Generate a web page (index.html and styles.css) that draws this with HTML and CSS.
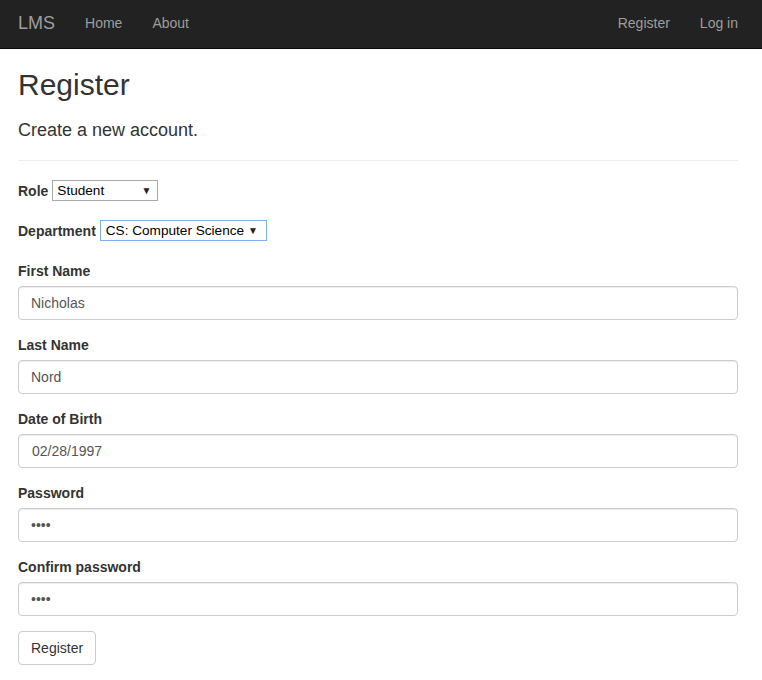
FILE: index.html
```html
<!DOCTYPE html>
<html lang="en">
<head>
<meta charset="utf-8">
<title>Register - LMS</title>
<link rel="stylesheet" href="styles.css">
</head>
<body>
<nav class="navbar">
  <a class="brand" href="#">LMS</a>
  <ul class="nav">
    <li><a href="#">Home</a></li>
    <li><a href="#">About</a></li>
  </ul>
  <ul class="nav nav-right">
    <li><a href="#">Register</a></li>
    <li><a href="#">Log in</a></li>
  </ul>
</nav>
<main class="content">
  <h2 class="title">Register</h2>
  <h4 class="subtitle">Create a new account.</h4>
  <hr class="rule">
  <form class="form">
    <div class="inline-row">
      <label class="label">Role</label>
      <div class="select select-role"><span class="select-text">Student</span><span class="arrow">&#9660;</span></div>
    </div>
    <div class="inline-row inline-row-last">
      <label class="label">Department</label>
      <div class="select select-dept"><span class="select-text">CS: Computer Science</span><span class="arrow">&#9660;</span></div>
    </div>
    <div class="group">
      <label class="label block">First Name</label>
      <input class="control" type="text" value="Nicholas">
    </div>
    <div class="group">
      <label class="label block">Last Name</label>
      <input class="control" type="text" value="Nord">
    </div>
    <div class="group">
      <label class="label block">Date of Birth</label>
      <input class="control control-date" type="text" value="02/28/1997">
    </div>
    <div class="group">
      <label class="label block">Password</label>
      <input class="control" type="password" value="1234">
    </div>
    <div class="group">
      <label class="label block">Confirm password</label>
      <input class="control" type="password" value="1234">
    </div>
    <button class="btn" type="button">Register</button>
  </form>
</main>
</body>
</html>
```

FILE: styles.css
```css
* { box-sizing: border-box; }
html, body { margin: 0; padding: 0; }
body {
  font-family: "Liberation Sans", Arial, Helvetica, sans-serif;
  font-size: 14px;
  line-height: 20px;
  color: #333;
  background: #fff;
}
.navbar {
  display: flex;
  align-items: flex-start;
  height: 49px;
  background: #222;
  border-bottom: 1px solid #080808;
  padding-left: 18px;
  padding-right: 9px;
}
.brand {
  font-size: 18px;
  line-height: 20px;
  color: #9d9d9d;
  text-decoration: none;
  padding: 13px 15px 15px 0;
}
.nav {
  display: flex;
  list-style: none;
  margin: 0;
  padding: 0;
}
.nav-right { margin-left: auto; }
.nav a {
  display: block;
  color: #9d9d9d;
  text-decoration: none;
  padding: 13px 15px 15px;
  line-height: 20px;
}
.content {
  padding: 0 24px 20px 18px;
}
.title {
  font-size: 30px;
  line-height: 33px;
  font-weight: 500;
  margin: 19px 0 0;
}
.subtitle {
  font-size: 18px;
  line-height: 20px;
  font-weight: 500;
  margin: 19px 0 0;
}
.rule {
  border: 0;
  border-top: 1px solid #eee;
  margin: 20px 0 19px;
  height: 0;
}
.form { margin: 0; }
.label {
  font-weight: bold;
  line-height: 20px;
}
.label.block {
  display: block;
  margin-bottom: 5px;
}
.inline-row {
  display: flex;
  align-items: center;
  gap: 4px;
  height: 21px;
  margin-bottom: 19px;
}
.inline-row-last { margin-bottom: 20px; }
.select {
  display: inline-flex;
  align-items: center;
  height: 21px;
  border: 1px solid #a9a9a9;
  background: #fff;
  color: #000;
  font-size: 13.6px;
  padding: 0 6px 0 4px;
}
.select-role { width: 106px; }
.select-dept {
  width: 167px;
  border-color: #7eaef0;
  padding: 0 8px 0 5px;
}
.select-text { white-space: nowrap; }
.arrow {
  margin-left: auto;
  font-size: 10px;
  line-height: 1;
  color: #222;
}
.group { margin-bottom: 15px; }
.control {
  display: block;
  width: 100%;
  height: 34px;
  padding: 6px 12px;
  font-family: "Liberation Sans", Arial, Helvetica, sans-serif;
  font-size: 14px;
  line-height: 20px;
  color: #555;
  background: #fff;
  border: 1px solid #ccc;
  border-radius: 4px;
  box-shadow: inset 0 1px 1px rgba(0,0,0,.075);
  outline: none;
}
.control-date { padding-left: 13px; }
.btn {
  display: inline-block;
  height: 34px;
  padding: 6px 12px;
  font-family: "Liberation Sans", Arial, Helvetica, sans-serif;
  font-size: 14px;
  line-height: 20px;
  color: #333;
  background: #fff;
  border: 1px solid #ccc;
  border-radius: 4px;
  cursor: pointer;
}
```
